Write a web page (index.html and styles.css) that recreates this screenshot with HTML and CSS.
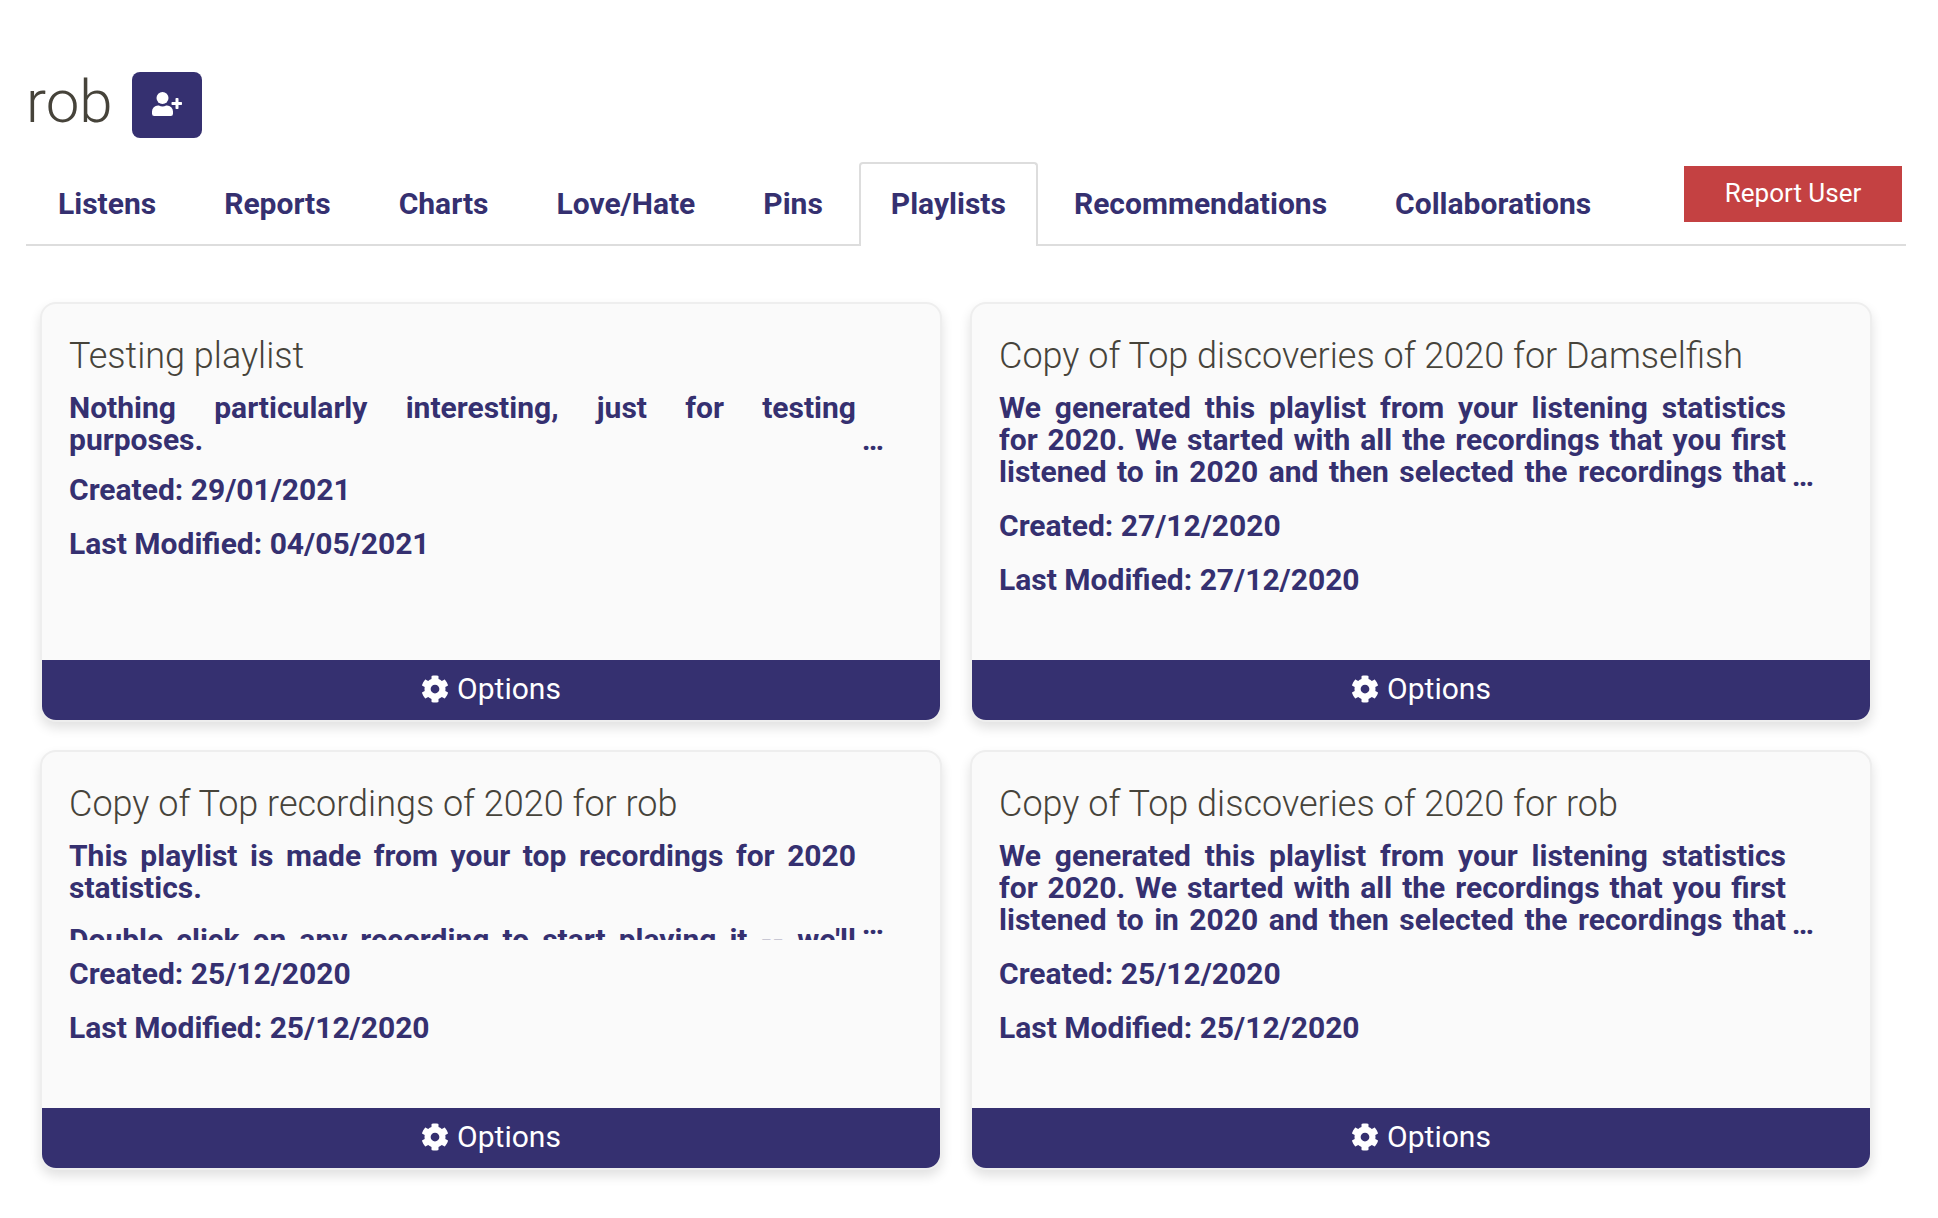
FILE: index.html
```
<!DOCTYPE html>
<html lang="en">
<head>
    <meta charset="UTF-8">
    <meta name="viewport" content="width=device-width, initial-scale=1.0">
    <title>Playlists - rob</title>
    <link rel="stylesheet" href="styles.css">
</head>
<body>

    <!-- cog used by every options button -->
    <svg class="sprite" aria-hidden="true">
        <symbol id="cog" viewBox="0 0 512 512">
            <path d="M487.4 315.7l-42.6-24.6c4.3-23.2 4.3-47 0-70.2l42.6-24.6c4.9-2.8 7.1-8.6 5.5-14-11.1-35.6-30-67.8-54.7-94.6-3.8-4.1-10-5.1-14.8-2.3L380.8 110c-17.9-15.4-38.5-27.3-60.8-35.1V25.8c0-5.6-3.9-10.5-9.4-11.7-36.7-8.2-74.3-7.8-109.2 0-5.5 1.2-9.4 6.1-9.4 11.7V75c-22.2 7.9-42.8 19.8-60.8 35.1L88.7 85.5c-4.9-2.8-11-1.9-14.8 2.3-24.7 26.7-43.6 58.9-54.7 94.6-1.7 5.4.6 11.2 5.5 14L67.3 221c-4.3 23.2-4.3 47 0 70.2l-42.6 24.6c-4.9 2.8-7.1 8.6-5.5 14 11.1 35.6 30 67.8 54.7 94.6 3.8 4.1 10 5.1 14.8 2.3l42.6-24.6c17.9 15.4 38.5 27.3 60.8 35.1v49.2c0 5.6 3.9 10.5 9.4 11.7 36.7 8.2 74.3 7.8 109.2 0 5.5-1.2 9.4-6.1 9.4-11.7v-49.2c22.2-7.9 42.8-19.8 60.8-35.1l42.6 24.6c4.9 2.8 11 1.9 14.8-2.3 24.7-26.7 43.6-58.9 54.7-94.6 1.5-5.5-.7-11.3-5.6-14.1zM256 336c-44.1 0-80-35.9-80-80s35.9-80 80-80 80 35.9 80 80-35.9 80-80 80z"/>
        </symbol>
    </svg>

    <header class="user-header">
        <h1>rob</h1>
        <button class="follow-button" type="button" aria-label="Follow user">
            <svg viewBox="0 0 30 24" width="30" height="24" aria-hidden="true">
                <circle cx="10.500" cy="6" r="6"/>
                <path d="M6 13.500h.8a8.500 8.500 0 0 0 7.400 0h.8a6 6 0 0 1 6 6v2.300a2.200 2.200 0 0 1-2.200 2.200H2.200A2.200 2.200 0 0 1 0 21.800v-2.300a6 6 0 0 1 6-6z"/>
                <path d="M23.500 6.700q0-.7.7-.7h1.600q.7 0 .7.700V10h2.800q.7 0 .7.700v1.600q0 .7-.7.700h-2.800v3.300q0 .7-.7.700h-1.600q-.7 0-.7-.7V13h-3.300q-.7 0-.7-.7v-1.600q0-.7.7-.7h3.300z"/>
            </svg>
        </button>
    </header>

    <nav class="tabs">
        <ul>
            <li><a href="#">Listens</a></li>
            <li><a href="#">Reports</a></li>
            <li><a href="#">Charts</a></li>
            <li><a href="#">Love/Hate</a></li>
            <li><a href="#">Pins</a></li>
            <li class="active"><a href="#">Playlists</a></li>
            <li><a href="#">Recommendations</a></li>
            <li><a href="#">Collaborations</a></li>
        </ul>
        <button class="report-button" type="button">Report User</button>
    </nav>

    <main class="playlists">
        <article class="card">
            <div class="card-body">
                <h2>Testing playlist</h2>
                <div class="description">
                    <div class="text">
                        <p><span class="line">Nothing particularly interesting, just for testing</span> purposes.</p>
                    </div>
                    <span class="more">…</span>
                </div>
                <p class="date">Created: 29/01/2021</p>
                <p class="date">Last Modified: 04/05/2021</p>
            </div>
            <button class="options-button" type="button"><svg aria-hidden="true"><use href="#cog"/></svg>Options</button>
        </article>

        <article class="card">
            <div class="card-body">
                <h2>Copy of Top discoveries of 2020 for Damselfish</h2>
                <div class="description">
                    <div class="text">
                        <p><span class="line">We generated this playlist from your listening statistics</span> <span class="line">for 2020. We started with all the recordings that you first</span> <span class="line">listened to in 2020 and then selected the recordings that</span> you listened to more than once.</p>
                    </div>
                    <span class="more">…</span>
                </div>
                <p class="date">Created: 27/12/2020</p>
                <p class="date">Last Modified: 27/12/2020</p>
            </div>
            <button class="options-button" type="button"><svg aria-hidden="true"><use href="#cog"/></svg>Options</button>
        </article>

        <article class="card">
            <div class="card-body">
                <h2>Copy of Top recordings of 2020 for rob</h2>
                <div class="description">
                    <div class="text">
                        <p><span class="line">This playlist is made from your top recordings for 2020</span> statistics.</p>
                        <p><span class="line">Double click on any recording to start playing it -- we'll</span> do our best to find a matching recording to play.</p>
                    </div>
                    <span class="more">…</span>
                </div>
                <p class="date">Created: 25/12/2020</p>
                <p class="date">Last Modified: 25/12/2020</p>
            </div>
            <button class="options-button" type="button"><svg aria-hidden="true"><use href="#cog"/></svg>Options</button>
        </article>

        <article class="card">
            <div class="card-body">
                <h2>Copy of Top discoveries of 2020 for rob</h2>
                <div class="description">
                    <div class="text">
                        <p><span class="line">We generated this playlist from your listening statistics</span> <span class="line">for 2020. We started with all the recordings that you first</span> <span class="line">listened to in 2020 and then selected the recordings that</span> you listened to more than once.</p>
                    </div>
                    <span class="more">…</span>
                </div>
                <p class="date">Created: 25/12/2020</p>
                <p class="date">Last Modified: 25/12/2020</p>
            </div>
            <button class="options-button" type="button"><svg aria-hidden="true"><use href="#cog"/></svg>Options</button>
        </article>
    </main>

</body>
</html>
```
FILE: styles.css
```
* {
    box-sizing: border-box;
}
body {
    margin: 0;
    padding: 64px 32px 48px 26px;
    font-family: Roboto, "Liberation Sans", sans-serif;
    font-size: 30px;
    line-height: 32px;
    color: #353070;
    background-color: #fff;
}
h1, h2, p, ul {
    margin: 0;
    padding: 0;
}
button {
    font-family: inherit;
    color: #fff;
    border: none;
    cursor: pointer;
}
svg {
    fill: currentColor;
}
.sprite {
    display: none;
}

/* user name and follow button */
.user-header {
    display: flex;
    align-items: center;
    gap: 19px;
    height: 76px;
}
.user-header h1 {
    font-size: 60px;
    line-height: 76px;
    font-weight: 300;
    color: #46433a;
}
.follow-button {
    display: flex;
    justify-content: center;
    align-items: center;
    width: 70px;
    height: 66px;
    margin-top: 6px;
    padding: 0 0 2px;
    border-radius: 8px;
    background-color: #353070;
}

/* tabs */
.tabs {
    display: flex;
    justify-content: space-between;
    align-items: flex-start;
    margin-top: 22px;
    padding-right: 4px;
    border-bottom: 2px solid #ddd;
}
.tabs ul {
    display: flex;
    gap: 4px;
    list-style: none;
}
.tabs a {
    display: block;
    margin-bottom: -2px;
    padding: 22px 30px 24px;
    border: 2px solid transparent;
    border-bottom: none;
    border-radius: 4px 4px 0 0;
    line-height: 36px;
    font-weight: 700;
    color: #353070;
    text-decoration: none;
}
.tabs .active a {
    border-color: #ddd;
    background-color: #fff;
}
.report-button {
    width: 218px;
    height: 56px;
    margin-top: 4px;
    padding-bottom: 4px;
    font-size: 26px;
    background-color: #c44142;
}

/* playlist cards */
.playlists {
    display: grid;
    grid-template-columns: 1fr 1fr;
    gap: 28px;
    margin-top: 56px;
    padding: 0 34px 0 14px;
}
.card {
    display: flex;
    flex-direction: column;
    min-height: 420px;
    overflow: hidden;
    border: 2px solid #eee;
    border-radius: 16px;
    background-color: #fafafa;
    box-shadow: 0 6px 12px rgba(0, 0, 0, 0.12);
}
.card-body {
    flex: 1;
    padding: 32px 56px 32px 27px;
}
.card h2 {
    margin-bottom: 16px;
    font-size: 36px;
    line-height: 40px;
    font-weight: 300;
    color: #46433a;
}
.description {
    display: flex;
    align-items: flex-end;
    margin-bottom: 18px;
    font-weight: 700;
}
.description .text {
    flex: 1;
    max-height: 100px;
    overflow: hidden;
    text-align: justify;
}
.description .text p + p {
    margin-top: 20px;
}
.description .line {
    display: block;
    text-align-last: justify;
}
.description .more {
    width: 28px;
    text-align: right;
}
.date {
    margin-bottom: 22px;
    font-weight: 700;
}
.options-button {
    display: flex;
    justify-content: center;
    align-items: center;
    gap: 8px;
    height: 60px;
    padding-bottom: 4px;
    font-size: 30px;
    background-color: #353070;
}
.options-button svg {
    width: 28px;
    height: 28px;
}
```
